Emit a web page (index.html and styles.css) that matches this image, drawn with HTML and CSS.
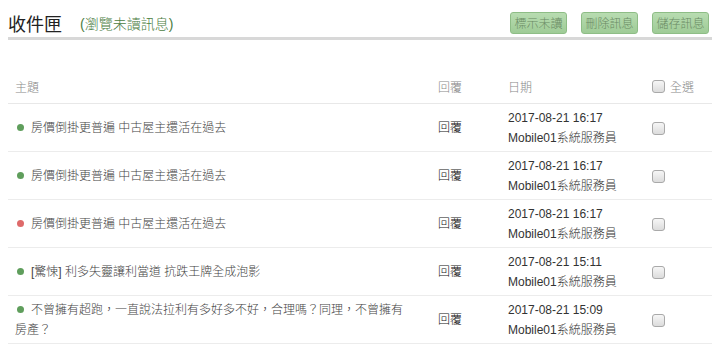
FILE: index.html
```html
<!DOCTYPE html>
<html lang="zh-Hant">
<head>
  <meta charset="UTF-8" />
  <title>收件匣</title>
  <link rel="stylesheet" href="styles.css">
</head>
<body>
  <div class="box-head">
    <h1>收件匣</h1>
    <a class="unread-link" href="#">(瀏覽未讀訊息)</a>
    <div class="actions">
      <button class="btn">標示未讀</button>
      <button class="btn">刪除訊息</button>
      <button class="btn">儲存訊息</button>
    </div>
  </div>

  <table class="inbox">
    <colgroup>
      <col class="c-subject">
      <col class="c-reply">
      <col class="c-date">
      <col class="c-check">
    </colgroup>
    <thead>
      <tr>
        <th>主題</th>
        <th>回覆</th>
        <th>日期</th>
        <th><label class="all"><input type="checkbox"> 全選</label></th>
      </tr>
    </thead>
    <tbody>
      <tr>
        <td class="subject"><span class="dot read"></span>房價倒掛更普遍 中古屋主還活在過去</td>
        <td class="reply">回覆</td>
        <td class="date">2017-08-21 16:17<br>Mobile01系統服務員</td>
        <td><input type="checkbox"></td>
      </tr>
      <tr>
        <td class="subject"><span class="dot read"></span>房價倒掛更普遍 中古屋主還活在過去</td>
        <td class="reply">回覆</td>
        <td class="date">2017-08-21 16:17<br>Mobile01系統服務員</td>
        <td><input type="checkbox"></td>
      </tr>
      <tr>
        <td class="subject"><span class="dot unread"></span>房價倒掛更普遍 中古屋主還活在過去</td>
        <td class="reply">回覆</td>
        <td class="date">2017-08-21 16:17<br>Mobile01系統服務員</td>
        <td><input type="checkbox"></td>
      </tr>
      <tr>
        <td class="subject"><span class="dot read"></span>[驚悚] 利多失靈讓利當道 抗跌王牌全成泡影</td>
        <td class="reply">回覆</td>
        <td class="date">2017-08-21 15:11<br>Mobile01系統服務員</td>
        <td><input type="checkbox"></td>
      </tr>
      <tr>
        <td class="subject"><span class="dot read"></span>不曾擁有超跑，一直說法拉利有多好多不好，合理嗎？同理，不曾擁有房產？</td>
        <td class="reply">回覆</td>
        <td class="date">2017-08-21 15:09<br>Mobile01系統服務員</td>
        <td><input type="checkbox"></td>
      </tr>
    </tbody>
  </table>
</body>
</html>
```

FILE: styles.css
```css
body { margin: 8px; font-family: "Liberation Sans", "Noto Sans CJK TC", sans-serif; font-size: 12px; color: #333; background: #fff; }

.box-head { display: flex; align-items: center; height: 29px; border-bottom: 3px solid #d8d8d8; }
.box-head h1 { margin: 0; font-size: 18px; font-weight: normal; color: #222; font-family: "Noto Sans CJK TC", sans-serif; }
.unread-link { margin-left: 18px; font-size: 14px; font-weight: 300; color: #4b7d3f; text-decoration: none; }
.actions { margin-left: auto; margin-right: 3px; display: flex; gap: 14px; }
.btn {
  height: 22px;
  width: 57px;
  padding: 0;
  font-family: "Noto Sans CJK TC", sans-serif;
  font-size: 12px;
  font-weight: 300;
  color: #6a8a63;
  background: linear-gradient(#b8dcb1, #9ecb96);
  border: 1px solid #8ebd86;
  border-radius: 3px;
}

.inbox { margin-top: 30px; width: 704px; border-collapse: collapse; table-layout: fixed; }
.c-subject { width: 423px; }
.c-reply { width: 70px; }
.c-date { width: 144px; }
.c-check { width: 67px; }

.inbox th { height: 33px; padding: 0 0 0 7px; text-align: left; font-weight: 300; color: #888; border-bottom: 1px solid #e8e8e8; }
.inbox td { height: 47px; padding: 0 0 0 7px; line-height: 20px; vertical-align: middle; border-bottom: 1px solid #ececec; font-weight: 300; }
.inbox td.subject { padding-right: 20px; color: #444; }

.inbox input[type="checkbox"] {
  appearance: none;
  margin: 0;
  width: 13px;
  height: 13px;
  vertical-align: middle;
  border: 1px solid #a9a9a9;
  border-radius: 3px;
  background: linear-gradient(#f6f6f6, #dcdcdc);
}
.all { display: inline-flex; align-items: center; gap: 5px; }

.dot { display: inline-block; width: 7px; height: 7px; border-radius: 50%; margin: 0 7px 1px 2px; vertical-align: middle; }
.dot.read { background: #5f9e5c; }
.dot.unread { background: #de6a6a; }

.reply { color: #111; }
.date { color: #333; }
```
